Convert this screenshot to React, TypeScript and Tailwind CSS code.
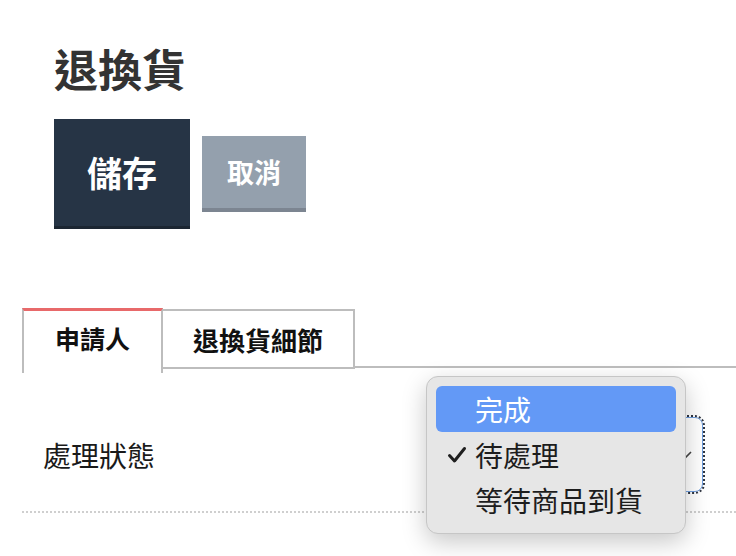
import { useState } from "react";

const options = ["完成", "待處理", "等待商品到貨"];

const Check = () => (
  <svg width="20" height="18" viewBox="0 0 20 18" className="text-[#1f1f1f]">
    <path
      d="M2.5 9.5 L7.5 15 L17.5 2.5"
      fill="none"
      stroke="currentColor"
      strokeWidth="3"
      strokeLinecap="round"
      strokeLinejoin="round"
    />
  </svg>
);

const App = () => {
  const [active] = useState(1);
  return (
    <div className="w-[736px] h-[556px] overflow-hidden bg-white font-['Noto_Sans_CJK_TC','Noto_Sans',sans-serif]">
      <section className="pl-[54px] pt-[40px]">
        <h1 className="text-[44px] leading-[56px] font-bold text-[#333]">退換貨</h1>
        <div className="flex items-center gap-x-3 mt-[23px]">
          <button className="w-[136px] h-[110px] bg-[#263445] border-b-[3px] border-[#1c2632] text-white text-[35px] font-bold">
            儲存
          </button>
          <button className="w-[104px] h-[76px] bg-[#94a0ad] border-b-4 border-[#7c8591] text-white text-[27px] font-bold">
            取消
          </button>
        </div>
      </section>

      <section className="relative mt-[79px] pl-[22px]">
        <div className="flex items-start">
          <div className="w-[141px] h-[65px] bg-white border-l-2 border-r-2 border-[#bdbdbd] border-t-[3px] border-t-[#e8696a] flex items-center justify-center pb-[6px]">
            <span className="text-[25px] font-bold text-[#111]">申請人</span>
          </div>
          <div className="w-[192px] h-[60px] mt-px border-t-2 border-r-2 border-b-2 border-[#bdbdbd] flex items-center justify-center">
            <span className="text-[26px] font-bold text-[#111]">退換貨細節</span>
          </div>
          <div className="flex-1 h-[60px] border-b-2 border-[#bdbdbd]" />
        </div>

        <div className="flex items-center justify-between h-[145px] -mt-[5px] pt-[30px] border-b-2 border-dotted border-[#cfcfcf] pl-[21px] pr-[33px]">
          <span className="text-[28px] text-[#1a1a1a]">處理狀態</span>
          <div className="w-[140px] h-[75px] rounded-[8px] border border-[#6f9fe0] outline-2 outline-dotted outline-[#2e3440] flex items-center justify-end pr-[10px]">
            <svg width="14" height="10" viewBox="0 0 14 10">
              <path d="M1 2 L7 8 L13 2" fill="none" stroke="#444" strokeWidth="1.6" />
            </svg>
          </div>
        </div>

        <div className="absolute left-[426px] top-[68px] w-[260px] h-[158px] rounded-[12px] bg-[#e6e6e6] border border-[#c6c6c6] shadow-[0_8px_24px_rgba(0,0,0,0.22)] p-[9px]">
          {options.map((o, i) => (
            <div
              key={o}
              className={
                i === 0
                  ? "h-[46px] rounded-[6px] bg-[#6399f6] text-white flex items-center"
                  : "h-[45px] text-[#1d1d1d] flex items-center"
              }
            >
              <span className="w-[39px] flex justify-end pr-[8px]">{i === active ? <Check /> : null}</span>
              <span className="text-[28px] leading-none">{o}</span>
            </div>
          ))}
        </div>
      </section>
    </div>
  );
};

export default App;
